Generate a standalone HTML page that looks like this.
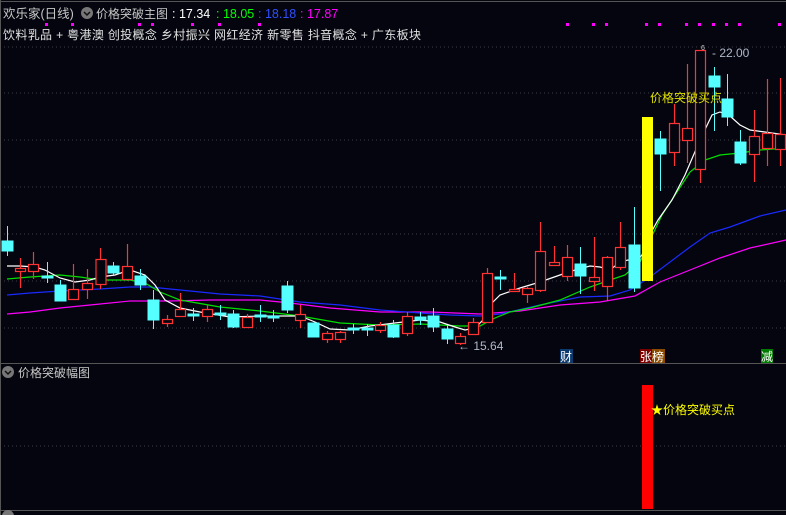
<!DOCTYPE html>
<html><head><meta charset="utf-8"><style>
body{margin:0;background:#04050e;width:786px;height:515px;overflow:hidden;font-family:"Liberation Sans","Noto Sans CJK SC",sans-serif}
svg{position:absolute;left:0;top:0}
text{font-family:"Liberation Sans","Noto Sans CJK SC",sans-serif}
</style></head><body>
<svg width="786" height="515" viewBox="0 0 786 515">
<rect width="786" height="515" fill="#04050e"/>
<line x1="0" y1="1.5" x2="786" y2="1.5" stroke="#555" />
<g stroke="#3a3d48" stroke-dasharray="1,3">
<line x1="0" y1="47" x2="786" y2="47"/><line x1="0" y1="93" x2="786" y2="93"/><line x1="0" y1="140" x2="786" y2="140"/><line x1="0" y1="187" x2="786" y2="187"/><line x1="0" y1="234" x2="786" y2="234"/><line x1="0" y1="281" x2="786" y2="281"/><line x1="0" y1="328" x2="786" y2="328"/><line x1="0" y1="446" x2="786" y2="446"/>
</g>
<line x1="0" y1="363.5" x2="786" y2="363.5" stroke="#555"/>
<line x1="0" y1="510.5" x2="786" y2="510.5" stroke="#555"/>
<line x1="0.5" y1="0" x2="0.5" y2="515" stroke="#555"/>
<g fill="#ff00ff">
<rect x="45" y="23" width="3" height="3"/><rect x="71" y="23" width="3" height="3"/><rect x="138" y="23" width="3" height="3"/><rect x="151" y="23" width="3" height="3"/><rect x="191" y="23" width="3" height="3"/><rect x="218" y="23" width="3" height="3"/><rect x="258" y="23" width="3" height="3"/>
<rect x="566" y="23" width="3" height="3"/><rect x="592" y="23" width="3" height="3"/><rect x="605" y="23" width="3" height="3"/><rect x="645" y="23" width="3" height="3"/><rect x="658" y="23" width="3" height="3"/><rect x="685" y="23" width="3" height="3"/><rect x="698" y="23" width="3" height="3"/><rect x="712" y="23" width="3" height="3"/><rect x="725" y="23" width="3" height="3"/><rect x="738" y="23" width="3" height="3"/><rect x="778" y="23" width="3" height="3"/>
</g>
<text x="3" y="18" font-size="12.5" fill="#c8c8c8">欢乐家(日线)</text>
<circle cx="87" cy="13" r="6" fill="#777"/><path d="M84 12l3 3 3-3" stroke="#111" fill="none" stroke-width="1.5"/>
<text x="96" y="18" font-size="12" fill="#c8c8c8">价格突破主图</text>
<text x="172" y="18" font-size="12.5" fill="#fff">: 17.34</text>
<text x="216" y="18" font-size="12.5" fill="#00ff00">: 18.05</text>
<text x="258" y="18" font-size="12.5" fill="#3050ff">: 18.18</text>
<text x="300" y="18" font-size="12.5" fill="#ff00ff">: 17.87</text>
<text x="3" y="39" font-size="12" fill="#e0e0e0" textLength="418" lengthAdjust="spacing">饮料乳品 + 粤港澳 创投概念 乡村振兴 网红经济 新零售 抖音概念  + 广东板块</text>
<polyline fill="none" stroke="#ff00ff" stroke-width="1.2" points="7,314 30,312 60,308 90,305 130,301 170,301 210,300 260,300 290,303 330,308 380,312 430,312 480,314 520,311 560,305 600,302 635,296 660,282 690,270 720,258 750,248 786,240"/>
<polyline fill="none" stroke="#1a2aff" stroke-width="1.2" points="7,295 30,293 60,291 80,290 100,289 130,287 150,287 180,290 220,294 260,296 300,302 340,305 380,310 420,313 450,315 480,316 500,314 540,305 580,297 610,296 630,290 650,277 670,262 690,247 710,233 730,227 760,216 786,210"/>
<polyline fill="none" stroke="#00e000" stroke-width="1.2" points="7,279 30,277 45,276 60,275 80,277 100,280 130,280 145,283 160,292 180,300 220,307 260,311 300,316 340,323 380,325 420,324 460,326 480,326 495,318 510,312 530,308 560,300 590,287 610,280 625,275 640,262 650,240 662,215 675,195 690,172 705,160 720,155 740,153 760,150 786,148"/>
<polyline fill="none" stroke="#fff" stroke-width="1.2" points="7,266 20,266 35,267 45,270 60,278 75,282 90,280 100,277 115,275 130,270 145,275 155,285 165,300 180,308 200,312 230,317 260,316 300,316 315,322 330,329 350,330 370,326 395,323 420,320 440,322 455,327 465,330 475,328 483,320 490,305 500,295 520,288 540,282 560,275 575,270 590,266 600,267 610,270 620,262 628,260 635,263 642,255 648,238 658,220 672,200 685,175 700,140 712,115 720,112 730,116 740,125 750,130 765,132 786,135"/>
<rect x="642" y="117" width="11" height="164" fill="#ffff00"/>
<g stroke="#5ff" fill="#5ff">
<line x1="7.5" y1="226" x2="7.5" y2="256"/><rect x="2" y="241" width="11" height="10"/>
<line x1="47.5" y1="262" x2="47.5" y2="283"/><rect x="42" y="276" width="11" height="2"/>
<line x1="60.5" y1="280" x2="60.5" y2="301"/><rect x="55" y="285" width="11" height="16"/>
<line x1="113.5" y1="262" x2="113.5" y2="275"/><rect x="108" y="266" width="11" height="7"/>
<line x1="140.5" y1="269" x2="140.5" y2="290"/><rect x="135" y="276" width="11" height="9"/>
<line x1="153.5" y1="290" x2="153.5" y2="329"/><rect x="148" y="300" width="11" height="20"/>
<line x1="193.5" y1="308" x2="193.5" y2="321"/><rect x="188" y="314" width="11" height="2"/>
<line x1="220.5" y1="305" x2="220.5" y2="320"/><rect x="215" y="313" width="11" height="2"/>
<line x1="233.5" y1="310" x2="233.5" y2="328"/><rect x="228" y="314" width="11" height="13"/>
<line x1="260.5" y1="305" x2="260.5" y2="322"/><rect x="255" y="315" width="11" height="2"/>
<line x1="273.5" y1="310" x2="273.5" y2="322"/><rect x="268" y="316" width="11" height="2"/>
<line x1="287.5" y1="281" x2="287.5" y2="313"/><rect x="282" y="286" width="11" height="24"/>
<rect x="308" y="323" width="11" height="14"/>
<line x1="353.5" y1="324" x2="353.5" y2="334"/><rect x="348" y="328" width="11" height="2"/>
<line x1="367.5" y1="324" x2="367.5" y2="336"/><rect x="362" y="328" width="11" height="2"/>
<line x1="393.5" y1="320" x2="393.5" y2="338"/><rect x="388" y="325" width="11" height="12"/>
<line x1="420.5" y1="312" x2="420.5" y2="325"/><rect x="415" y="317" width="11" height="3"/>
<line x1="433.5" y1="308" x2="433.5" y2="332"/><rect x="428" y="316" width="11" height="11"/>
<line x1="447.5" y1="325" x2="447.5" y2="344"/><rect x="442" y="329" width="11" height="10"/>
<line x1="500.5" y1="270" x2="500.5" y2="290"/><rect x="495" y="277" width="11" height="2"/>
<line x1="580.5" y1="247" x2="580.5" y2="294"/><rect x="575" y="264" width="11" height="12"/>
<line x1="634.5" y1="207" x2="634.5" y2="292"/><rect x="629" y="245" width="11" height="43"/>
<line x1="660.5" y1="131" x2="660.5" y2="191"/><rect x="655" y="139" width="11" height="15"/>
<line x1="714.5" y1="67" x2="714.5" y2="131"/><rect x="709" y="76" width="11" height="11"/>
<line x1="727.5" y1="74" x2="727.5" y2="126"/><rect x="722" y="99" width="11" height="18"/>
<line x1="740.5" y1="130" x2="740.5" y2="165"/><rect x="735" y="142" width="11" height="21"/>
</g>
<g stroke="#ff3333" fill="#04050e" stroke-width="1.2">
<line x1="20.5" y1="258" x2="20.5" y2="288"/><rect x="15.5" y="268.5" width="10" height="3"/>
<line x1="33.5" y1="252" x2="33.5" y2="279"/><rect x="28.5" y="264.5" width="10" height="7"/>
<line x1="73.5" y1="264" x2="73.5" y2="300"/><rect x="68.5" y="289.5" width="10" height="10"/>
<line x1="87.5" y1="269" x2="87.5" y2="299"/><rect x="82.5" y="283.5" width="10" height="6"/>
<line x1="100.5" y1="248" x2="100.5" y2="289"/><rect x="96" y="259.5" width="10" height="25"/>
<line x1="127.5" y1="244" x2="127.5" y2="281"/><rect x="122.5" y="266.5" width="10" height="13"/>
<line x1="167.5" y1="315" x2="167.5" y2="327"/><rect x="162.5" y="319.5" width="10" height="4"/>
<line x1="180.5" y1="293" x2="180.5" y2="316"/><rect x="175.5" y="309.5" width="10" height="7"/>
<line x1="207.5" y1="305" x2="207.5" y2="322"/><rect x="202.5" y="309.5" width="10" height="7"/>
<line x1="247.5" y1="314" x2="247.5" y2="328"/><rect x="242.5" y="317.5" width="10" height="10"/>
<line x1="300.5" y1="305" x2="300.5" y2="328"/><rect x="295.5" y="314.5" width="10" height="6"/>
<line x1="327.5" y1="331" x2="327.5" y2="343"/><rect x="322.5" y="333.5" width="10" height="6"/>
<line x1="340.5" y1="331" x2="340.5" y2="343"/><rect x="335.5" y="332.5" width="10" height="7"/>
<line x1="380.5" y1="322" x2="380.5" y2="333"/><rect x="375.5" y="325.5" width="10" height="5"/>
<line x1="407.5" y1="312" x2="407.5" y2="336"/><rect x="402.5" y="316.5" width="10" height="17"/>
<line x1="460.5" y1="333" x2="460.5" y2="345"/><rect x="455.5" y="336.5" width="10" height="7"/>
<line x1="473.5" y1="318" x2="473.5" y2="335"/><rect x="468.5" y="322.5" width="10" height="12"/>
<line x1="487.5" y1="268" x2="487.5" y2="323"/><rect x="482.5" y="273.5" width="10" height="49"/>
<line x1="514.5" y1="273" x2="514.5" y2="292"/><rect x="509.5" y="289.5" width="10" height="2"/>
<line x1="527.5" y1="286" x2="527.5" y2="303"/><rect x="522.5" y="288.5" width="10" height="6"/>
<line x1="540.5" y1="222" x2="540.5" y2="292"/><rect x="535.5" y="251.5" width="10" height="39"/>
<line x1="554.5" y1="246" x2="554.5" y2="266"/><rect x="549.5" y="262.5" width="10" height="3"/>
<line x1="567.5" y1="245" x2="567.5" y2="281"/><rect x="562.5" y="257.5" width="10" height="19"/>
<line x1="594.5" y1="237" x2="594.5" y2="291"/><rect x="589.5" y="277.5" width="10" height="4"/>
<line x1="607.5" y1="256" x2="607.5" y2="301"/><rect x="602.5" y="257.5" width="10" height="29"/>
<line x1="620.5" y1="222" x2="620.5" y2="270"/><rect x="615.5" y="247.5" width="10" height="20"/>
<line x1="674.5" y1="104" x2="674.5" y2="166"/><rect x="669.5" y="123.5" width="10" height="29"/>
<line x1="687.5" y1="64" x2="687.5" y2="163"/><rect x="682.5" y="128.5" width="10" height="12"/>
<line x1="700.5" y1="50" x2="700.5" y2="183"/><rect x="695.5" y="50.5" width="10" height="119"/>
<line x1="754.5" y1="110" x2="754.5" y2="182"/><rect x="749.5" y="136.5" width="10" height="18"/>
<line x1="767.5" y1="79" x2="767.5" y2="166"/><rect x="762.5" y="133.5" width="10" height="15"/>
<line x1="780.5" y1="78" x2="780.5" y2="166"/><rect x="775.5" y="134.5" width="10" height="15"/>
</g>
<text x="650" y="102" font-size="12" fill="#e0e000">价格突破买点</text>
<text x="701" y="50" font-size="7" fill="#ccc">6</text>
<text x="712" y="57" font-size="12" fill="#b0b8c8">- 22.00</text>
<text x="458" y="350" font-size="12" fill="#b0b8c8">← 15.64</text>
<rect x="560" y="349" width="13" height="14" fill="#0d3a6e"/><text x="560" y="361" font-size="12" fill="#fff">财</text>
<rect x="640" y="349" width="12" height="14" fill="#7a0000"/><text x="640" y="361" font-size="12" fill="#fff">张</text>
<rect x="652" y="349" width="13" height="14" fill="#8a4a00"/><text x="652" y="361" font-size="12" fill="#fff">榜</text>
<rect x="761" y="349" width="12" height="14" fill="#007a00"/><text x="761" y="361" font-size="12" fill="#fff">减</text>
<circle cx="8" cy="372" r="6" fill="#777"/><path d="M5 371l3 3 3-3" stroke="#111" fill="none" stroke-width="1.5"/>
<text x="18" y="377" font-size="12" fill="#c8c8c8">价格突破幅图</text>
<rect x="642" y="385" width="11" height="124" fill="#ff0000"/>
<text x="651" y="414" font-size="12" fill="#ffff00">★价格突破买点</text>
<circle cx="8" cy="516" r="6" fill="#777"/>
</svg>
</body></html>
